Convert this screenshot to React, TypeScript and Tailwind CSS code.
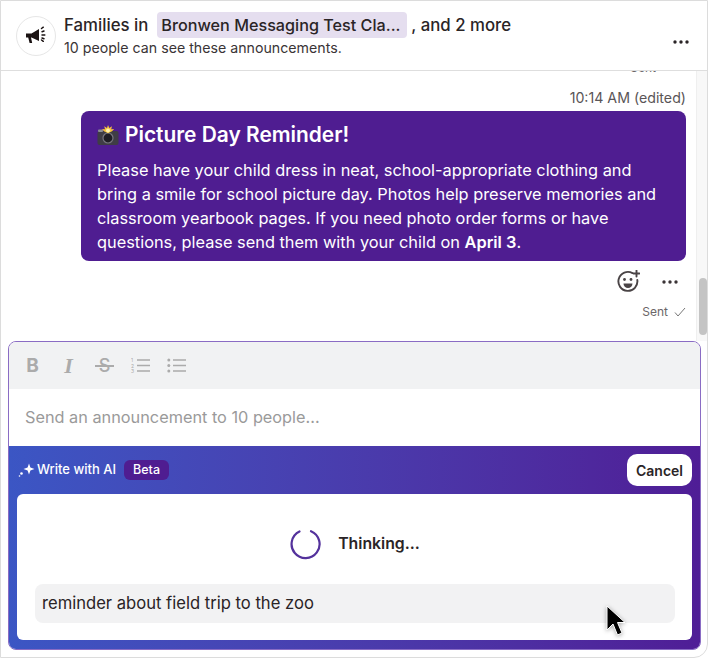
import React from "react";

const font = { fontFamily: "Inter, 'Noto Sans', sans-serif" };

function Megaphone() {
  return (
    <svg width="22" height="20" viewBox="0 0 22 20" fill="none">
      <path d="M1 7.500h5.500L14 3v12L6.500 11.500H6l1.200 5.500H4.600L3.200 11.500H1z" fill="#1a1212" />
      <path d="M16.500 2.500l1.800-1.300M17 9h2.800M16.500 14l1.800 1.300M17 5.800l2-.8M17 12l2 .8" stroke="#1a1212" strokeWidth="1.500" strokeLinecap="round" />
    </svg>
  );
}

function Dots({ color = "#2a2426" }: { color?: string }) {
  return (
    <svg width="16" height="4" viewBox="0 0 16 4">
      <circle cx="2" cy="2" r="1.700" fill={color} />
      <circle cx="8" cy="2" r="1.700" fill={color} />
      <circle cx="14" cy="2" r="1.700" fill={color} />
    </svg>
  );
}

function CameraFlash() {
  return (
    <svg width="22" height="21" viewBox="0 0 22 21" className="shrink-0">
      <rect x="0.500" y="6" width="21" height="14" rx="2" fill="#3f3d45" />
      <rect x="1" y="4.500" width="5" height="2.500" rx="1" fill="#8b8d95" />
      <circle cx="11" cy="13" r="5" fill="#1f1d24" stroke="#77757f" strokeWidth="1.200" />
      <path d="M11 0l1.300 3 2.700-1.700-.8 3 3-.2-2.200 2.200-4 2-4-2L5 4.100l3 .2-.8-3L10 3z" fill="#f4c13d" />
      <circle cx="11" cy="5.500" r="2" fill="#fff2b0" />
    </svg>
  );
}

function SmilePlus() {
  return (
    <svg width="24" height="24" viewBox="0 0 24 24" fill="none">
      <path d="M16.500 3.100A9.500 9.500 0 1 0 21.300 10" stroke="#4a4446" strokeWidth="1.900" strokeLinecap="round" />
      <circle cx="8.500" cy="9.500" r="1.400" fill="#4a4446" />
      <circle cx="15" cy="9.500" r="1.400" fill="#4a4446" />
      <path d="M7.500 13.500h9a4.500 4.500 0 0 1-9 0z" fill="#4a4446" />
      <path d="M20.500 0.500v6M17.500 3.500h6" stroke="#4a4446" strokeWidth="1.900" strokeLinecap="round" />
    </svg>
  );
}

function Toolbar() {
  const c = "#ababab";
  return (
    <div className="h-[47px] shrink-0 bg-[#f1f2f3] flex items-center gap-[17px] pl-[14px]">
      <span className="w-[19px] text-center text-[19px] font-bold leading-none text-[#ababab]">B</span>
      <span className="w-[19px] text-center text-[22px] font-bold italic leading-none text-[#ababab] [font-family:'Liberation_Serif',serif]">I</span>
      <span className="relative w-[19px] text-center text-[18px] font-medium leading-none text-[#ababab]">
        S
        <span className="absolute left-0 right-0 top-[8px] h-[2px] bg-[#ababab]" />
      </span>
      <svg width="19" height="17" viewBox="0 0 19 17" fill="none">
        <path d="M6 3h13M6 8.500h13M6 14h13" stroke={c} strokeWidth="1.600" />
        <text x="0" y="5" fontSize="5" fill={c}>1</text>
        <text x="0" y="10.500" fontSize="5" fill={c}>2</text>
        <text x="0" y="16" fontSize="5" fill={c}>3</text>
      </svg>
      <svg width="19" height="17" viewBox="0 0 19 17" fill="none">
        <path d="M6 3h13M6 8.500h13M6 14h13" stroke={c} strokeWidth="1.600" />
        <circle cx="1.800" cy="3" r="1.500" fill={c} />
        <circle cx="1.800" cy="8.500" r="1.500" fill={c} />
        <circle cx="1.800" cy="14" r="1.500" fill={c} />
      </svg>
    </div>
  );
}

export default function App() {
  return (
    <div style={font} className="relative w-[708px] h-[658px] overflow-hidden bg-white border border-[#dcdcdc] rounded-br-[14px] flex flex-col text-[#2a2426]">
      <header className="h-[70px] shrink-0 flex items-center pl-[15px] pr-[18px] border-b border-[#dedede]">
        <div className="w-[40px] h-[40px] rounded-full border border-[#e6e6e6] flex items-center justify-center shrink-0">
          <Megaphone />
        </div>
        <div className="ml-[8px] flex-1 min-w-0 mt-[-1px]">
          <div className="flex items-center h-[26px] leading-[26px] text-[16.800px] font-medium whitespace-nowrap">
            <span className="leading-[26px]">Families in</span>
            <span className="ml-[9px] bg-[#e5deef] rounded-[4px] pl-[4px] h-[26px] leading-[26px] w-[250px] text-[16.200px]">Bronwen Messaging Test Cla...</span>
            <span className="ml-[4px] leading-[26px]">, and 2 more</span>
          </div>
          <div className="text-[14.200px] leading-[20px] text-[#3a3436]">10 people can see these announcements.</div>
        </div>
        <div className="mt-[12px]"><Dots /></div>
      </header>

      <main className="h-[270px] shrink-0 flex overflow-hidden">
        <div className="flex-1 min-w-0 pr-[10px]">
          <div className="h-[19px] text-right text-[12px] leading-[12px] mt-[-9px] mr-[16px] text-[#6b6668]">Sent ✓</div>
          <div className="text-right text-[14.200px] leading-[18px] text-[#5a5557] mt-[8px]">10:14 AM (edited)</div>
          <div className="ml-[80px] mt-[4px] h-[150px] bg-[#4f1d91] rounded-[8px] text-white px-[16px] pt-[12px]">
            <div className="flex items-center gap-[6px] text-[20.900px] font-semibold leading-[24px] whitespace-nowrap">
              <CameraFlash />
              <span>Picture Day Reminder!</span>
            </div>
            <p className="mt-[11px] text-[16.350px] leading-[24px]">
              Please have your child dress in neat, school-appropriate clothing and bring a smile for school picture day. Photos help preserve memories and classroom yearbook pages. If you need photo order forms or have questions, please send them with your child on <b className="font-semibold">April 3</b>.
            </p>
          </div>
          <div className="flex justify-end items-center gap-[22px] mt-[7px] pr-[8px] h-[28px]">
            <SmilePlus />
            <Dots color="#3a3436" />
          </div>
          <div className="mt-[8px] flex justify-end items-center gap-[6px] text-[12px] text-[#6b6668] leading-[16px]">
            <span>Sent</span>
            <svg width="12" height="10" viewBox="0 0 12 10" fill="none"><path d="M1 5.500l3 3.500 7-8" stroke="#777" strokeWidth="1" /></svg>
          </div>
        </div>
        <div className="w-[11px] shrink-0 bg-[#f8f8f8] border-l border-[#efefef] relative">
          <div className="absolute top-[207px] left-[2px] w-[8px] h-[57px] rounded-full bg-[#c4c4c4]" />
        </div>
      </main>

      <section className="ml-[7px] mr-[6px] mb-[7px] flex-1 min-h-0 rounded-[8px] border-[1.500px] border-[#8a6cc4] flex flex-col overflow-hidden">
        <Toolbar />
        <div className="h-[57px] shrink-0 bg-white flex items-center pl-[16px] text-[16.300px] text-[#9a9a9a]">
          Send an announcement to 10 people...
        </div>
        <div className="flex-1 min-h-0 bg-gradient-to-r from-[#3b56c4] to-[#4f1d96] px-[8px] flex flex-col">
          <div className="h-[48px] shrink-0 flex items-center">
            <svg width="17" height="14" viewBox="0 0 17 14" className="ml-[1px]">
              <path d="M11 0.500l1.400 4.100L16.500 6l-4.100 1.400L11 11.500 9.600 7.400 5.500 6l4.100-1.400z" fill="#fff" />
              <circle cx="3.500" cy="10.500" r="1.300" fill="#fff" />
              <circle cx="1.500" cy="13" r="0.800" fill="#fff" />
            </svg>
            <span className="ml-[2px] text-[13px] font-medium text-white whitespace-nowrap">Write with AI</span>
            <span className="ml-[8px] h-[20px] leading-[20px] px-[9px] rounded-[6px] bg-[#4f1d91] text-white text-[12.500px] font-medium">Beta</span>
            <button className="ml-auto w-[65px] h-[32px] bg-white rounded-[10px] text-[14px] font-semibold text-[#2a2426]">Cancel</button>
          </div>
          <div className="h-[146px] shrink-0 bg-white rounded-[6px] pl-[18px] pr-[17px] flex flex-col">
            <div className="h-[90px] shrink-0 pt-[9px] flex items-center justify-center">
              <svg width="32" height="32" viewBox="0 0 32 32" fill="none">
                <path d="M9.500 3.500a14 14 0 1 0 11.500 -.3" stroke="#54329c" strokeWidth="2.200" strokeLinecap="round" />
              </svg>
              <span className="ml-[16px] text-[15.800px] font-semibold">Thinking...</span>
            </div>
            <div className="h-[39px] shrink-0 bg-[#f2f2f3] rounded-[8px] flex items-center pl-[7px] text-[16.600px] text-[#2a2426]">
              reminder about field trip to the zoo
            </div>
          </div>
        </div>
      </section>

      <svg width="22" height="34" viewBox="0 0 22 34" className="absolute left-[604px] top-[604px]" style={{ filter: "drop-shadow(0 1px 2px rgba(0,0,0,.35))" }}>
        <path d="M2 1v24l6-6 4.500 11 4.500-2-4.500-10.500H20z" fill="#000" stroke="#fff" strokeWidth="1" />
      </svg>
    </div>
  );
}
